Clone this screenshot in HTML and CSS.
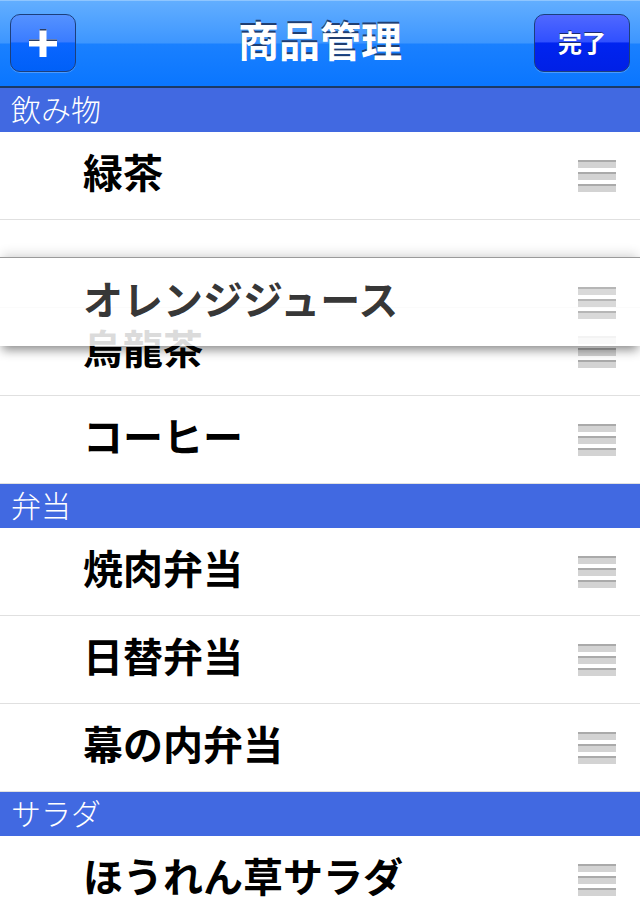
FILE: index.html
```html
<!DOCTYPE html>
<html lang="ja">
<head>
<meta charset="utf-8">
<title>商品管理</title>
<link rel="stylesheet" href="styles.css">
</head>
<body>
<div class="screen">
  <header class="navbar">
    <div class="nav-left">
      <button class="nav-btn add-btn" aria-label="追加">
        <svg width="28" height="28" viewBox="0 0 28 28" class="plus">
          <rect x="10.5" y="0" width="7" height="28" fill="#fff"/>
          <rect x="0" y="10.5" width="28" height="7" fill="#fff"/>
          <rect x="10.5" y="0" width="7" height="1.5" fill="#2a3f66"/>
          <rect x="0" y="10.5" width="10.5" height="1.5" fill="#2a3f66"/>
          <rect x="17.5" y="10.5" width="10.5" height="1.5" fill="#2a3f66"/>
        </svg>
      </button>
    </div>
    <h1 class="title">商品管理</h1>
    <div class="nav-right">
      <button class="nav-btn done-btn">完了</button>
    </div>
  </header>

  <main class="list">
    <div class="section-header">飲み物</div>
    <div class="row"><span class="label">緑茶</span><span class="grip"><i></i><i></i><i></i></span></div>
    <div class="row empty"></div>
    <div class="row"><span class="label">烏龍茶</span><span class="grip"><i></i><i></i><i></i></span></div>
    <div class="row"><span class="label">コーヒー</span><span class="grip"><i></i><i></i><i></i></span></div>

    <div class="section-header">弁当</div>
    <div class="row"><span class="label">焼肉弁当</span><span class="grip"><i></i><i></i><i></i></span></div>
    <div class="row"><span class="label">日替弁当</span><span class="grip"><i></i><i></i><i></i></span></div>
    <div class="row"><span class="label">幕の内弁当</span><span class="grip"><i></i><i></i><i></i></span></div>

    <div class="section-header">サラダ</div>
    <div class="row"><span class="label">ほうれん草サラダ</span><span class="grip"><i></i><i></i><i></i></span></div>

    <div class="row dragging"><span class="label">オレンジジュース</span><span class="grip"><i></i><i></i><i></i></span></div>
  </main>
</div>
</body>
</html>
```

FILE: styles.css
```css
* { box-sizing: border-box; }
html, body {
  margin: 0;
  padding: 0;
  background: #fff;
}
body {
  font-family: "Noto Sans CJK JP", "Noto Sans", sans-serif;
  width: 640px;
  height: 920px;
  overflow: hidden;
}
.screen {
  width: 640px;
  height: 920px;
  overflow: hidden;
  position: relative;
}

/* Nav bar */
.navbar {
  height: 88px;
  display: grid;
  grid-template-columns: 1fr auto 1fr;
  align-items: center;
  padding: 0 10px 2px 10px;
  border-top: 1px solid #8fc6ff;
  border-bottom: 2px solid #1b3a66;
  background: linear-gradient(to bottom,
    #62aeff 0px, #3d96ff 42px,
    #1a80ff 43px, #0a76ff 85px);
}
.nav-left { display: flex; justify-content: flex-start; }
.nav-right { display: flex; justify-content: flex-end; }
.title {
  margin: 0 0 6px 0;
  color: #fff;
  font-size: 41px;
  font-weight: 700;
  line-height: 1;
  text-shadow: 0 -2px 0 #1f3e72;
}
.nav-btn {
  height: 58px;
  border-radius: 10px;
  border: 1px solid #1c3f7c;
  color: #fff;
  font-family: inherit;
  display: flex;
  align-items: center;
  justify-content: center;
  padding: 0;
  box-shadow: 0 1px 0 rgba(255,255,255,0.25);
}
.add-btn {
  width: 66px;
  background: linear-gradient(to bottom,
    #5592ff 0%, #3a7cff 48%,
    #0a66ff 50%, #0060f8 100%);
}
.done-btn {
  width: 96px;
  font-size: 24px;
  font-weight: 700;
  padding-bottom: 3px;
  text-shadow: 0 -1px 0 #1a2a70;
  background: linear-gradient(to bottom,
    #5068ff 0%, #3050ff 48%,
    #0024f0 50%, #0020e6 100%);
}
.plus { display: block; }

/* List */
.list {
  display: flex;
  flex-direction: column;
}
.section-header {
  height: 44px;
  background: #4169e1;
  color: #fff;
  font-size: 30px;
  font-weight: 300;
  line-height: 40px;
  padding-left: 11px;
}
.row {
  height: 88px;
  flex: none;
  display: flex;
  align-items: center;
  justify-content: space-between;
  padding: 0 24px 0 83px;
  border-bottom: 1px solid #e0e0e0;
  background: #fff;
}
.row:last-child { border-bottom: 0; }
.label {
  font-size: 40px;
  font-weight: 700;
  color: #000;
  line-height: 1;
  padding-bottom: 9px;
}
.grip {
  display: flex;
  flex-direction: column;
  gap: 4px;
  width: 38px;
  padding-top: 1px;
}
.grip i {
  display: block;
  height: 8px;
  background: #d3d3d3;
  border-top: 2px solid #aaaaaa;
}

/* Row being dragged, floating over the list */
.row.dragging {
  position: absolute;
  left: 0;
  top: 257px;
  width: 640px;
  height: 89px;
  border-bottom: 0;
  background: rgba(255,255,255,0.86);
  box-shadow: 0 -6px 10px -2px rgba(0,0,0,0.12), 0 6px 10px -2px rgba(0,0,0,0.45);
  border-top: 1px solid #9a9a9a;
}
.row.dragging .label { color: rgba(0,0,0,0.8); }
.row.dragging .grip i { opacity: 0.85; }
```
